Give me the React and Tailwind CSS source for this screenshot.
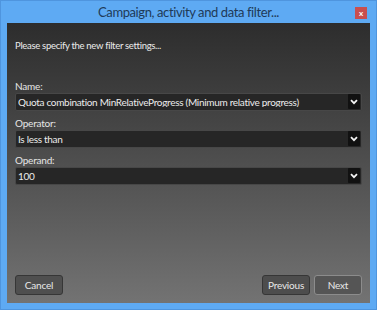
import React from "react";

function Chevron() {
  return (
    <svg width="8" height="6" viewBox="0 0 8 6" className="block">
      <path d="M1 1.2 L4 4.2 L7 1.2" stroke="#f2f2f2" strokeWidth="1.8" fill="none" />
    </svg>
  );
}

function Select({ value }) {
  return (
    <div className="h-[18px] flex items-center bg-[#262626] border border-[#474747] rounded-[2px] pl-[2px] pr-[1px]">
      <span className="flex-1 text-[10px] tracking-[-0.3px] text-[#ececec] leading-none truncate">{value}</span>
      <div className="w-[12px] h-[15px] bg-[#111111] rounded-[1px] flex items-center justify-center">
        <Chevron />
      </div>
    </div>
  );
}

function Field({ label, value }) {
  return (
    <div className="flex flex-col">
      <div className="text-[10px] tracking-[-0.2px] text-[#e6e6e6] leading-none h-[14px] flex items-end pb-[2px]">{label}</div>
      <Select value={value} />
    </div>
  );
}

export default function App() {
  return (
    <div
      className="w-[377px] h-[310px] bg-[#5eaaf3] border border-[#4f95de] flex flex-col"
      style={{ fontFamily: "Lato, \"Open Sans\", sans-serif" }}
    >
      {/* Title bar */}
      <div className="h-[22px] relative flex items-center justify-center">
        <span className="text-[13px] tracking-[-0.4px] text-[#203a58] leading-none">Campaign, activity and data filter...</span>
        <div className="absolute right-[9px] top-[6px] w-[12px] h-[12px] bg-[#c94f4f] flex items-center justify-center">
          <span className="text-[8px] text-white leading-none font-bold">x</span>
        </div>
      </div>

      {/* Body */}
      <div className="flex-1 mx-[6px] mb-[6px] bg-gradient-to-b from-[#2d2d2d] to-[#737373] flex flex-col px-[8px]">
        <div className="mt-[18px] text-[9.5px] tracking-[-0.3px] text-[#ececec] leading-none">Please specify the new filter settings...</div>

        <div className="mt-[28px] flex flex-col gap-[5px]">
          <Field label="Name:" value="Quota combination MinRelativeProgress (Minimum relative progress)" />
          <Field label="Operator:" value="Is less than" />
          <Field label="Operand:" value="100" />
        </div>

        <div className="mt-auto mb-[8px] flex items-center">
          <button className="w-[48px] h-[20px] bg-[#4f4f4f] border border-[#363636] rounded-[3px] text-[10px] tracking-[-0.2px] text-[#e8e8e8]">Cancel</button>
          <div className="flex-1" />
          <button className="w-[48px] h-[20px] bg-[#4d4d4d] border border-[#363636] rounded-[3px] text-[10px] tracking-[-0.2px] text-[#e8e8e8]">Previous</button>
          <button className="ml-[4px] w-[48px] h-[20px] bg-[#555555] border border-[#8c8c8c] rounded-[3px] text-[10px] tracking-[-0.2px] text-[#e8e8e8]">Next</button>
        </div>
      </div>
    </div>
  );
}
